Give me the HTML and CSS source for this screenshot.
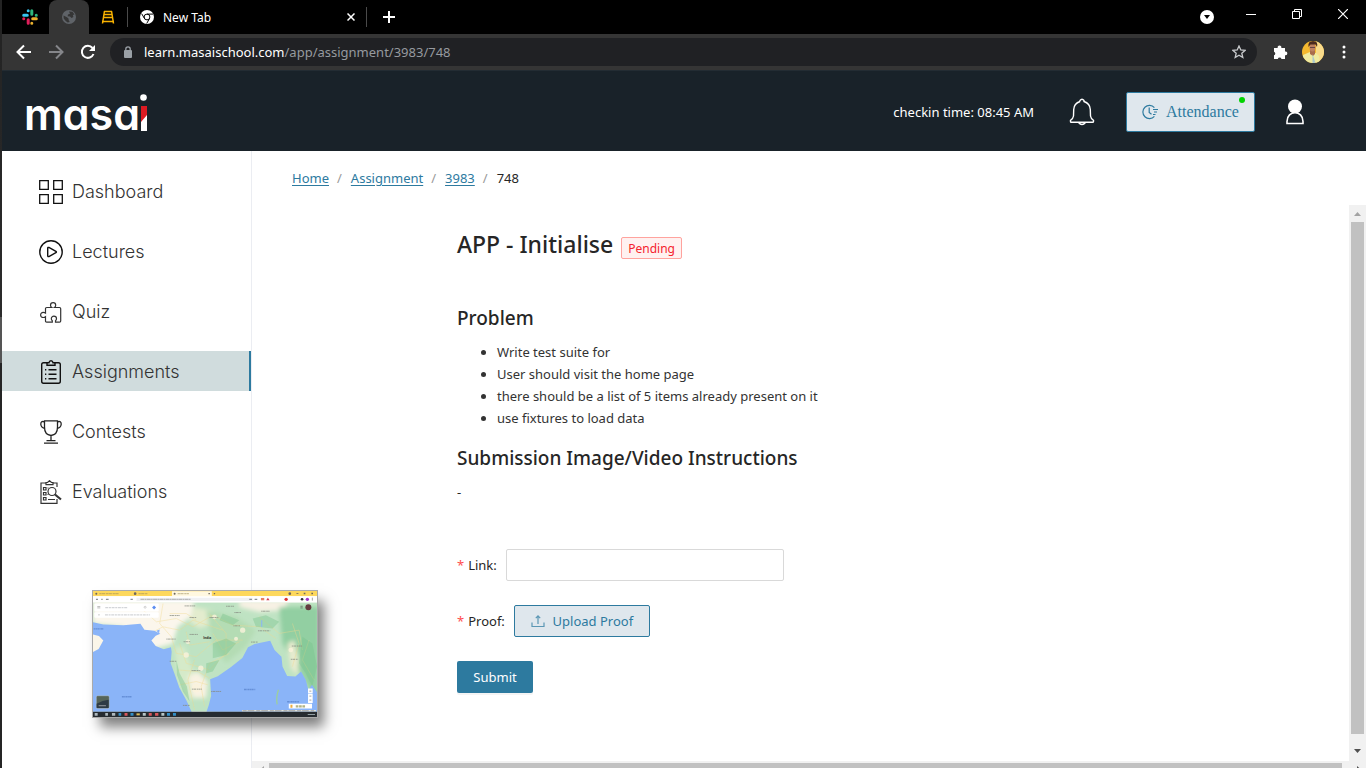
FILE: index.html
```html
<!DOCTYPE html>
<html lang="en">
<head>
<meta charset="utf-8">
<title>Masai - Assignment</title>
<link rel="stylesheet" href="styles.css">
</head>
<body>
<div class="window">
  <div class="tabstrip">
    <button class="pin pin-slack" aria-label="Slack">
      <svg width="16" height="16" viewBox="0 0 16 16" stroke-width="3" stroke-linecap="round" fill="none"><path d="M1.7 6.2H5.3M6.2 1.7v.1" stroke="#36c5f0"/><path d="M9.8 1.7v3.600M14.300 6.200h-.1" stroke="#2eb67d"/><path d="M10.700 9.800h3.600M9.800 14.300v-.1" stroke="#ecb22e"/><path d="M6.200 10.700v3.600M1.700 9.800h.1" stroke="#e01e5a"/></svg>
    </button>
    <button class="pin pin-active" aria-label="Masai">
      <svg width="14" height="14" viewBox="0 0 14 14"><circle cx="7" cy="7" r="7" fill="#5f6368"/><path d="M1.500 5.500 5 7.200l1.500 1.300.2 1.800 1 1.700-2 .5-2-1.500-2-2.500zM7 1.500l3.500.3 2 2.700-1.700.4.6 2.200-1.900.9-1.500-1.600-2.400-.2.4-1.800 2-.6z" fill="#353535"/></svg>
    </button>
    <button class="pin" aria-label="Ladder">
      <svg width="14" height="14" viewBox="0 0 14 14" stroke="#f9b200" fill="none"><path d="M3.500 1 1.500 13.500M10.500 1l2 12.500" stroke-width="1.500"/><path d="M3 1.500h8M3 4.500h8M2 7.500h10M1 11.500h12" stroke-width="1.500"/></svg>
    </button>
    <span class="tabline"></span>
    <button class="tab">
      <svg width="14" height="14" viewBox="0 0 14 14"><circle cx="7" cy="7" r="7" fill="#fff"/><circle cx="7" cy="7" r="2.900" fill="none" stroke="#000" stroke-width="1"/><path d="M7 4.100h6M4.500 8.500 1.600 3.600M9.500 8.500 6.700 13.500" stroke="#000"/></svg>
      <span>New Tab</span>
    </button>
    <button class="closetab" aria-label="Close tab"><svg width="8" height="8" viewBox="0 0 8 8"><path d="M.5.500l7 7M7.500.500l-7 7" stroke="#fff" stroke-width="1.500"/></svg></button>
    <span class="tabline"></span>
    <button class="newtab" aria-label="Open new tab"><svg width="12" height="12" viewBox="0 0 12 12"><path d="M6 0v12M0 6h12" stroke="#fff" stroke-width="2"/></svg></button>
    <div class="wincontrols">
      <button class="tabsearch" aria-label="Search tabs"><svg width="14" height="14" viewBox="0 0 14 14"><circle cx="7" cy="7" r="7" fill="#fff"/><path d="M4 5h6L7 9z" fill="#000"/></svg></button>
      <button aria-label="Minimize"><svg width="10" height="10" viewBox="0 0 10 10"><path d="M0 5.500h10" stroke="#fff"/></svg></button>
      <button aria-label="Restore"><svg width="10" height="10" viewBox="0 0 10 10" fill="none" stroke="#fff"><path d="M.5 2.500h7v7h-7zM2.500 2.500v-2h7v7h-2"/></svg></button>
      <button aria-label="Close"><svg width="10" height="10" viewBox="0 0 10 10"><path d="M0 0l10 10M10 0 0 10" stroke="#fff" stroke-width="1.200"/></svg></button>
    </div>
  </div>
  <div class="toolbar">
    <button aria-label="Back"><svg width="16" height="16" viewBox="0 0 16 16" fill="none" stroke="#fff" stroke-width="2"><path d="M15 8H2M8 1.500 1.500 8 8 14.500"/></svg></button>
    <button aria-label="Forward"><svg width="16" height="16" viewBox="0 0 16 16" fill="none" stroke="#85868a" stroke-width="2"><path d="M1 8h13M8 1.500 14.500 8 8 14.500"/></svg></button>
    <button aria-label="Reload"><svg width="16" height="16" viewBox="0 0 16 16"><path d="M13.500 10A6 6 0 1 1 12.500 4" fill="none" stroke="#fff" stroke-width="2"/><path d="M15 1v6H9z" fill="#fff"/></svg></button>
    <div class="omnibox">
      <svg width="10" height="12" viewBox="0 0 10 12"><rect x="1" y="4" width="8" height="8" rx="1" fill="#9aa0a6"/><path d="M2.800 4.500V3a2.200 2.200 0 0 1 4.400 0v1.500" fill="none" stroke="#9aa0a6" stroke-width="1.300"/></svg>
      <span class="url"><b>learn.masaischool.com</b>/app/assignment/3983/748</span>
      <svg width="14" height="14" viewBox="0 0 14 14"><path d="m7 1 1.800 4 4.200.4-3.200 2.800 1 4.300L7 10.200l-3.800 2.300 1-4.300L1 5.400 5.200 5z" fill="none" stroke="#c8cacd" stroke-width="1.300"/></svg>
    </div>
    <button aria-label="Extensions"><svg width="15" height="15" viewBox="0 0 15 15"><path d="M1 3h3.700a1.900 1.900 0 1 1 3.600 0H12v3.500a1.900 1.900 0 1 1 0 3.700V14H8.500a1.900 1.900 0 0 0-3.700 0H1v-3.700a1.900 1.900 0 0 0 0-3.600z" fill="#fff"/></svg></button>
    <button class="avatar" aria-label="Profile"><svg width="22" height="22" viewBox="0 0 22 22"><defs><clipPath id="av"><circle cx="11" cy="11" r="11"/></clipPath></defs><g clip-path="url(#av)"><path d="M0 0h22v22H0z" fill="#f4b92f"/><path d="M14 0h8v22h-8z" fill="#f9db8b"/><path d="M0 22l1-8 7-3 6 1 3 3 1 7z" fill="#f0eba0"/><path d="M8 8h5v5l-2 2-3-2z" fill="#a96c4c"/><ellipse cx="10.500" cy="6.500" rx="3" ry="4" fill="#bd8060"/><path d="M6.500 6Q5.500 0 11 0t4 6l-1.500-2.500h-5z" fill="#4b2a1e"/><path d="M8 6.500h5" stroke="#644"/><path d="m10.500 13 3 9h-3z" fill="#a9c8cc"/></g></svg></button>
    <button aria-label="Menu"><svg width="4" height="14" viewBox="0 0 4 14" fill="#fff"><circle cx="2" cy="2" r="1.500"/><circle cx="2" cy="7" r="1.500"/><circle cx="2" cy="12" r="1.500"/></svg></button>
  </div>

  <header class="header">
    <a class="logo" href="#" aria-label="masai">
      <span>masa</span>
      <svg width="7" height="37" viewBox="0 0 7 37"><circle cx="3.500" cy="3.500" r="3.300" fill="#fff"/><path d="M1 12h6v25H1z" fill="#fff"/><path d="M1 12h6v9l-6 7z" fill="#dc1a22"/></svg>
    </a>
    <span class="checkin">checkin time: 08:45 AM</span>
    <button class="iconbtn" aria-label="Notifications"><svg width="26" height="28" viewBox="0 0 26 28" fill="none" stroke="#fff" stroke-width="1.400"><path d="M11 3.500V2.500q2-2.500 4 0v1q6 2 6.300 8l.2 6.500q.5 3 3 4.300v1.200q0 .8-1 .8H2.500q-1 0-1-.8v-1.200Q4 21 4.500 18l.2-6.500q.3-6 6.300-8M9.500 24.500q3.500 4 7 0"/></svg></button>
    <button class="attendance">
      <svg width="16" height="16" viewBox="0 0 16 16" fill="none" stroke="#2d7a9f" stroke-width="1.200"><path d="M12.400 3.600A6.600 6.600 0 1 0 12.400 12.400M7.200 3.500v5l2.300 1.700M11 5.500h5M12 8h3M11 10.500h2.500"/></svg>
      <span>Attendance</span>
      <i class="dot"></i>
    </button>
    <button class="iconbtn" aria-label="Account"><svg width="20" height="26" viewBox="0 0 20 26"><circle cx="10" cy="7.500" r="7" fill="#fff"/><path d="M2 24.500v-2C2 10.800 18 10.800 18 22.500v2z" fill="#192229" stroke="#fff" stroke-width="1.600"/></svg></button>
  </header>

  <div class="body">
    <nav class="sidebar">
      <a href="#"><svg width="24" height="24" viewBox="0 0 24 24" fill="none" stroke="#111" stroke-width="1.300"><path d="M.7.700h8.600v8.600H.700zM14.700.700h8.600v8.600h-8.600zM.700 14.700h8.600v8.600H.700zM14.700 14.700h8.600v8.600h-8.600z"/></svg>Dashboard</a>
      <a href="#"><svg width="24" height="24" viewBox="0 0 24 24" fill="none" stroke="#111" stroke-width="1.400"><circle cx="12" cy="12" r="11.200"/><path d="M8.700 8.200q0-1.200 1.200-.7l7 3.800q1 .7 0 1.400l-7 3.800q-1.200.5-1.200-.7z"/></svg>Lectures</a>
      <a href="#"><svg width="24" height="24" viewBox="0 0 24 24" fill="none" stroke="#333" stroke-width="1.200"><path d="M7.700 7.500h5q-1.200-1-1.200-2.300a2.600 2.600 0 0 1 5.200 0q0 1.300-1.200 2.300h5q1.200 0 1.200 1.200V21q0 1.200-1.200 1.200h-4v-1.500q1-.8 1-2a2.600 2.600 0 0 0-5.200 0q0 1.200 1 2v1.500H7.700q-1.200 0-1.200-1.200v-4.300q-1 .8-2.300.8a2.600 2.600 0 1 1 0-5.200q1.300 0 2.300.8V8.700q0-1.200 1.200-1.200z"/></svg>Quiz</a>
      <a href="#" class="active"><svg width="24" height="24" viewBox="0 0 24 24" fill="none" stroke="#111" stroke-width="1.400"><path d="M8 2.700H4.500Q2.700 2.700 2.700 4.500v16.800q0 2 1.800 2h15q1.800 0 1.800-2V4.500q0-1.800-1.800-1.800H16M8 5.200V2.700h2q.3-2 2-2t2 2h2v2.500zM6 9.700h1.300M9.500 9.700h8M6 14.200h1.300M9.500 14.200h8M6 18.700h1.300M9.500 18.700h8"/></svg>Assignments</a>
      <a href="#"><svg width="24" height="24" viewBox="0 0 24 24" fill="none" stroke="#222" stroke-width="1.300"><path d="M5.500.800h13v6.500q0 7.500-6.500 8.200-6.500-.7-6.500-8.200zM5.500 2C3 .800 1.700 2 1.800 4.200q.3 3.500 4.400 4.500M18.500 2c2.500-1.200 3.800 0 3.700 2.200q-.3 3.500-4.400 4.500M12 15.500v5M7.500 20.700h9M5 23.200h14"/></svg>Contests</a>
      <a href="#"><svg width="24" height="24" viewBox="0 0 24 24" fill="none" stroke="#333" stroke-width="1.200"><path d="M7 3H2v20.300h16V19M13.500 3H18v4M7 4.700V2.500h1.500l2-1.800 2 1.800H14v2.200z"/><path d="M4.500 7.500H7V10H4.500zM4.500 12.500H7V15H4.500zM4.500 17.500H7V20H4.500zM9 19.500h7M9.500 8h-1M9.500 14.500h-1"/><circle cx="13" cy="11.500" r="4"/><path d="m16 14.500 6 5" stroke-width="2.200"/></svg>Evaluations</a>
    </nav>
    <main class="main">
      <nav class="crumbs"><a href="#">Home</a><i>/</i><a href="#">Assignment</a><i>/</i><a href="#">3983</a><i>/</i><span>748</span></nav>
      <div class="pane">
        <div class="content">
          <div class="titlerow"><h1>APP - Initialise</h1><span class="tag">Pending</span></div>
          <h2>Problem</h2>
          <ul>
            <li>Write test suite for</li>
            <li>User should visit the home page</li>
            <li>there should be a list of 5 items already present on it</li>
            <li>use fixtures to load data</li>
          </ul>
          <h2>Submission Image/Video Instructions</h2>
          <p>-</p>
          <form>
            <div class="row"><label for="link"><em>*</em>Link:</label><input id="link" type="text"></div>
            <div class="row"><label for="proof"><em>*</em>Proof:</label><button id="proof" type="button" class="upload"><svg width="14" height="14" viewBox="0 0 14 14" fill="none" stroke="#5b97b4" stroke-width="1.200"><path d="M1 8.500v4h12v-4M7 10V2M4.800 4.200 7 1.800l2.200 2.400"/></svg>Upload Proof</button></div>
            <button type="button" class="submit">Submit</button>
          </form>
        </div>
        <div class="vbar"><svg width="7" height="4" viewBox="0 0 7 4"><path d="M0 4h7L3.500 0z" fill="#a3a3a3"/></svg><div class="thumb"></div><svg width="7" height="4" viewBox="0 0 7 4"><path d="M0 0h7L3.500 4z" fill="#505050"/></svg></div>
      </div>
      <div class="hbar"><svg width="4" height="7" viewBox="0 0 4 7"><path d="M4 0v7L0 3.500z" fill="#a3a3a3"/></svg><div class="thumb"></div><svg width="4" height="7" viewBox="0 0 4 7"><path d="M0 0v7l4-3.500z" fill="#505050"/></svg></div>
    </main>
  </div>
</div>

<div class="preview">
<svg viewBox="39 32 675 380" preserveAspectRatio="none" role="img" aria-label="Map window preview">
  <defs>
    <filter id="soft" x="-10%" y="-10%" width="120%" height="120%"><feGaussianBlur stdDeviation="7"/></filter>
    <filter id="fine"><feGaussianBlur stdDeviation="1.200"/></filter>
    <clipPath id="mapclip"><path d="M39 66h675v330H39z"/></clipPath>
  </defs>
  <g clip-path="url(#mapclip)">
    <path d="M39 66h675v330H39z" fill="#bfe3c3"/>
    <g filter="url(#soft)">
      <path d="M39 60h305l-10 50-40 30-15 50-70 20-80-70-90-10z" fill="#fbf6ec"/>
      <path d="M480 60h150l-20 30-70 5-60-15z" fill="#f7f1e4"/>
      <path d="M340 80l60 10 10 35-50 20-30-20z" fill="#e3ecce"/>
      <path d="M285 200l30 0 20 60 30 40-10 50-30 10-30-60z" fill="#d5eac9"/>
      <path d="M325 290l30-15 30 30-5 50-40 0z" fill="#f8f2e2"/>
      <path d="M440 150l60-10 10 25-50 20z" fill="#eef0da"/>
      <path d="M600 80h120v300l-40-70-30-60-40-60z" fill="#92cfa2"/>
      <path d="M380 90l90 20 60 40-30 50-60 50-40-60z" fill="#b4dcb4"/>
      <path d="M625 190l20-10 15 60-5 45-20-20z" fill="#e8ebcf"/>
    </g>
    <g fill="none" stroke="#f1d88d" stroke-width="1.800" opacity=".65">
      <path d="M190 90l40 35 60-10 50 25 60-35 60 30 80 5 50 35M250 70l-10 60 35 40 15 50 60 10 60-50 80 0M300 190l20 60 70 20 50-50 0-60-50-60M345 240l-20 60 20 90M375 380l-10-60 25-70 60-30M540 110l60 50 60-10 10 60M640 130l20 60-20 70M210 160l40-20 50 10 40-30 90 30M690 180l-20 60 35 60"/>
      <path d="M270 100l50 0 30 20M400 160l30 50 50-25M320 155l10 40 60-10M295 270l60 5 35 20M300 315l50-10 35 10"/>
    </g>
    <g fill="#fbf3dc" opacity=".8" filter="url(#fine)"><circle cx="325" cy="185" r="7"/><circle cx="350" cy="325" r="13"/><circle cx="364" cy="265" r="8"/><circle cx="320" cy="225" r="8"/><circle cx="490" cy="150" r="8"/><circle cx="470" cy="176" r="6"/><circle cx="405" cy="110" r="7"/><circle cx="635" cy="210" r="7"/></g>
    <g fill="#78c38c" opacity=".4" filter="url(#fine)"><path d="M290 240l10 40 22 40 8 45-20-30-18-50zM400 190l40-15 30 15-30 35-40 10zM380 250l40-10-20 35-20 5zM520 115l40-10 40 20-20 20-50-5zM660 250l20 30 20 40 14-60-14-70-30-20zM430 100l50 20-20 15-40-15z"/></g>
    <g fill="#8ab4f8">
      <path d="M39 126l31 7 60 2 52-4 12 18 30 3 18 9-14 6-13 14 13 17 24 10 22-6 2 14-3 34 14 38 12 35 22 40 14 31 5 12H39z"/>
      <path d="M381 396l7-20 7-28-3-50 23-9 40-28 34-27 17-32 20-10 47-10 13 28 21 20 3 30 14 28 25 2 17-15 14 25 8 30 11-15 15 22v70z"/>
      <path d="M230 152l10-4-2 12zM546 120h3v20h-3z"/>
    </g>
    <path d="M39 163l18 5 13 13-14 26-17 9z" fill="#fbf6e9"/>
    <path d="M598 330q-8 22-4 44" stroke="#9ecf9c" stroke-width="4" fill="none"/>
    <g stroke="#858a80" stroke-width="3" stroke-dasharray="4 1 8 2 5 1" opacity=".75" filter="url(#fine)"><path d="M315 77h32M330 112h20M390 112h27M462 137h20M536 152h37M638 198h31M635 238h22M336 272h27M337 328h30M312 185h20M330 163h25M260 177h28M270 244h20M310 377h20M395 335h30M546 93h25M440 78h24M270 106h30M515 186h20M465 97h20"/></g>
    <path d="M126 351h30M494 329h34M624 366h36M41 146h30" stroke="#5c86d0" stroke-width="4" stroke-dasharray="6 1 3 1" opacity=".8"/>
    <text class="country" x="371" y="177">India</text>
    <rect x="43" y="70" width="194" height="24" rx="3" fill="#fff"/><rect x="43" y="96" width="194" height="17" rx="3" fill="#fff"/>
    <path d="M52 79h9M52 83h9" stroke="#999" stroke-width="2"/><path d="M76 82h68M75 104h136" stroke="#d3d5d8" stroke-width="4" stroke-dasharray="9 2 6 2"/><circle cx="196" cy="81" r="3" fill="none" stroke="#bbb" stroke-width="2"/><path d="M223 76l6 6-6 6-6-6z" fill="#5b8df0"/><circle cx="57" cy="104" r="2" fill="#aaa"/>
    <circle cx="688" cy="81" r="9" fill="#633c40"/><path d="M664 78h7M664 83h7" stroke="#555" stroke-width="2"/>
    <rect x="49" y="348" width="39" height="38" rx="4" fill="#56655a" stroke="#dfe5ea" stroke-width="1"/><path d="M50 372l18-8 18-4v25H50z" fill="#2e3b44"/><path d="M56 378h22" stroke="#ccc" stroke-width="2"/>
    <path d="M687 326h14v15h-14zM687 343h14v27h-14zM629 372h70v14h-70z" fill="#fff"/><path d="M691 334h6M691 349h6M691 361h6" stroke="#777" stroke-width="2"/><path d="M634 375h6v9h-6z" fill="#edac3d"/><path d="M650 380h30" stroke="#b1b385" stroke-width="7" stroke-dasharray="8 2"/><path d="M488 391h223v5H488z" fill="#e2e4de"/><path d="M490 393h215" stroke="#888" stroke-width="2" stroke-dasharray="12 3 20 6"/>
  </g>
  <path d="M39 32h675v16H39z" fill="#fdd85c"/><path d="M277 33h120v15H277z" fill="#fff8e0"/><path d="M39 48h675v18H39z" fill="#fff"/>
  <path d="M170 52h350v10H170z" fill="#f0f1f3"/>
  <path d="M58 40h60M176 40h28M294 40h34" stroke="#9b8c58" stroke-width="4" stroke-dasharray="7 1 10 2" opacity=".5"/>
  <g fill="#6d655b"><circle cx="49" cy="40" r="3"/><circle cx="166" cy="40" r="4"/><circle cx="285" cy="40" r="3"/><circle cx="632" cy="40" r="4"/><path d="M387 38h4v4h-4zM403 38h4v4h-4zM652 39h6v2h-6zM674 37h5v5h-5zM697 37h5v5h-5z"/></g>
  <path d="M182 57h152" stroke="#aaa" stroke-width="3" stroke-dasharray="12 1 5 1"/><path d="M48 57h6M64 57h4M78 57h8M152 57h7M510 57h8M526 57h8" stroke="#8b8f95" stroke-width="4"/>
  <path d="M545 53h10v7h-10z" fill="#e57e62"/><path d="M561 60l5-8 5 8z" fill="#d8384d"/><circle cx="621" cy="57" r="5" fill="#db3434"/><circle cx="669" cy="57" r="4" fill="#333"/><circle cx="685" cy="57" r="5" fill="#a336c8"/><path d="M700 52v9" stroke="#777" stroke-width="2"/>
  <path d="M39 396h675v16H39z" fill="#262b30"/>
  <path d="M44 400h9v8h-9zM76 400h8v8h-8zM96 400h10v8H96z" fill="#aeb8bd"/><path d="M116 400h8v8h-8zM152 400h9v8h-9zM262 400h9v8h-9zM280 400h9v8h-9z" fill="#338fc8"/><path d="M134 400h9v8h-9zM207 400h9v8h-9zM226 400h10v8h-10z" fill="#d9575c"/><path d="M170 401h10v6h-10z" fill="#d8b85a"/><path d="M189 400h9v8h-9zM245 400h9v8h-9zM686 403h22v2h-22z" fill="#b7c6c8"/>
</svg>
</div>
</body>
</html>
```
FILE: styles.css
```css
* { box-sizing: border-box; }
body {
  margin: 0;
  height: 100vh;
  overflow: hidden;
  background: linear-gradient(#232323 0, #2b2b2b 317px, #555 317px, #555 363px, #252525 363px);
  font-family: "Noto Sans", "Open Sans", sans-serif;
  font-size: 13px;
  color: #262626;
}
button {
  border: 0;
  padding: 0;
  background: none;
  font: inherit;
  color: inherit;
  display: flex;
  align-items: center;
  justify-content: center;
}
svg { display: block; flex: none; }
.window { height: 100%; margin-left: 2px; display: flex; flex-direction: column; background: #fff; }

.tabstrip { height: 34px; flex: none; display: flex; align-items: center; background: #000; color: #fff; font-size: 12px; }
.pin { width: 38px; height: 34px; }
.pin-slack { width: 47px; padding-left: 9px; }
.pin-active { width: 40px; background: #353535; border-radius: 8px 8px 0 0; }
.tabline { width: 1px; height: 20px; background: #4a4a4a; }
.tab { gap: 9px; padding-left: 12px; width: 208px; justify-content: flex-start; }
.closetab { width: 30px; }
.newtab { width: 43px; }
.wincontrols { margin-left: auto; display: flex; align-items: flex-start; height: 34px; gap: 36px; padding-right: 18px; }
.wincontrols button { height: 28px; }
.wincontrols .tabsearch { height: 34px; margin-right: -4px; }

.toolbar { height: 36px; flex: none; display: flex; align-items: center; gap: 16px; padding: 0 20px 0 14px; background: #353535; }
.omnibox { flex: 1; height: 28px; margin-left: -2px; border-radius: 14px; background: #202124; display: flex; align-items: center; padding: 0 11px 0 13px; gap: 11px; }
.url { flex: 1; color: #969a9f; }
.url b { color: #fff; font-weight: 400; }
.avatar { margin: 0 2px 0 -2px; }

.header { height: 81px; flex: none; display: flex; align-items: center; background: #192229; border-top: 1px solid #232c33; padding: 1px 57px 0 22px; color: #fff; }
.logo { display: flex; align-items: flex-end; color: #fff; text-decoration: none; height: 38px; margin-right: auto; }
.logo span { font: 600 43px/34px Inter, sans-serif; font-feature-settings: "cv11"; }
.iconbtn { width: 28px; height: 40px; }
.checkin { margin-right: 34px; }
.attendance { position: relative; width: 129px; height: 40px; margin: 0 26px 0 30px; gap: 8px; background: #dfe7ed; border: 1px solid #2d7a9f; border-radius: 2px; color: #2d7a9f; font: 16px "Liberation Serif", serif; }
.dot { position: absolute; top: 4px; right: 9px; width: 6px; height: 6px; border-radius: 50%; background: #00d300; }

.body { flex: 1; min-height: 0; display: flex; }
.sidebar { width: 250px; flex: none; border-right: 1px solid #ebedf2; padding-top: 20px; display: flex; flex-direction: column; gap: 20px; }
.sidebar a { height: 40px; display: flex; align-items: center; gap: 9px; padding-left: 37px; font: 300 18px Inter, sans-serif; color: #333; text-decoration: none; }
.sidebar svg { margin-top: 1px; }
.sidebar .active { background: #d0dcdd; border-right: 2px solid #2d7a9f; }

.main { flex: 1; min-width: 0; display: flex; flex-direction: column; }
.crumbs { height: 54px; flex: none; display: flex; align-items: center; padding-left: 40px; }
.crumbs a { color: #2d7a9f; text-underline-offset: 2px; }
.crumbs i { color: #999; font-style: normal; margin: 0 9px 0 8px; }
.pane { flex: 1; min-height: 0; display: flex; }
.content { flex: 1; padding: 23px 0 0 205px; }
.titlerow { display: flex; align-items: center; gap: 8px; height: 32px; margin-bottom: 44px; }
h1 { margin: 0; font-size: 23px; font-weight: 500; line-height: 32px; }
.tag { height: 22px; margin-top: 8px; padding: 0 6px; border: 1px solid #ffa39e; border-radius: 2px; background: #fff1f0; color: #f5222d; font-size: 12px; line-height: 21px; }
h2 { margin: 0 0 9px; font-size: 19px; font-weight: 500; line-height: 28px; }
ul { margin: 0 0 15px; padding-left: 40px; line-height: 22px; color: #333; }
p { margin: 0 0 46px; line-height: 22px; }
form { display: flex; flex-direction: column; align-items: flex-start; gap: 24px; }
.row { display: flex; align-items: center; gap: 9px; }
.row em { color: #ff4d4f; font-style: normal; margin-right: 4px; }
.row input { width: 278px; height: 32px; border: 1px solid #d9d9d9; border-radius: 2px; padding: 0 11px; font: inherit; }
.upload { width: 136px; height: 32px; gap: 8px; background: #dfe7ed; border: 1px solid #2d7a9f; border-radius: 2px; color: #2d7a9f; }
.submit { width: 76px; height: 32px; background: #2d7a9f; border-radius: 2px; color: #fff; box-shadow: 0 2px 0 #f4f4f4; }
.vbar { width: 17px; background: #f1f1f1; display: flex; flex-direction: column; align-items: center; gap: 6px; padding: 7px 0 8px; }
.vbar .thumb { flex: 1; width: 13px; background: #c1c1c1; margin-bottom: 9px; }
.hbar { height: 7px; flex: none; overflow: hidden; background: #f1f1f1; display: flex; align-items: flex-start; gap: 5px; padding: 2px 5px 0 8px; }
.hbar .thumb { flex: 1; height: 13px; background: #c1c1c1; margin-right: 10px; }
.hbar svg { margin-top: 3px; }

.preview { position: absolute; left: 92px; top: 590px; width: 226px; height: 128px; border: 1px solid #aaa; box-shadow: 7px 10px 12px -1px rgba(0, 0, 0, .5); }
.preview svg { width: 100%; height: 100%; }
.country { font: 700 11px Roboto, sans-serif; fill: #333; }
```
